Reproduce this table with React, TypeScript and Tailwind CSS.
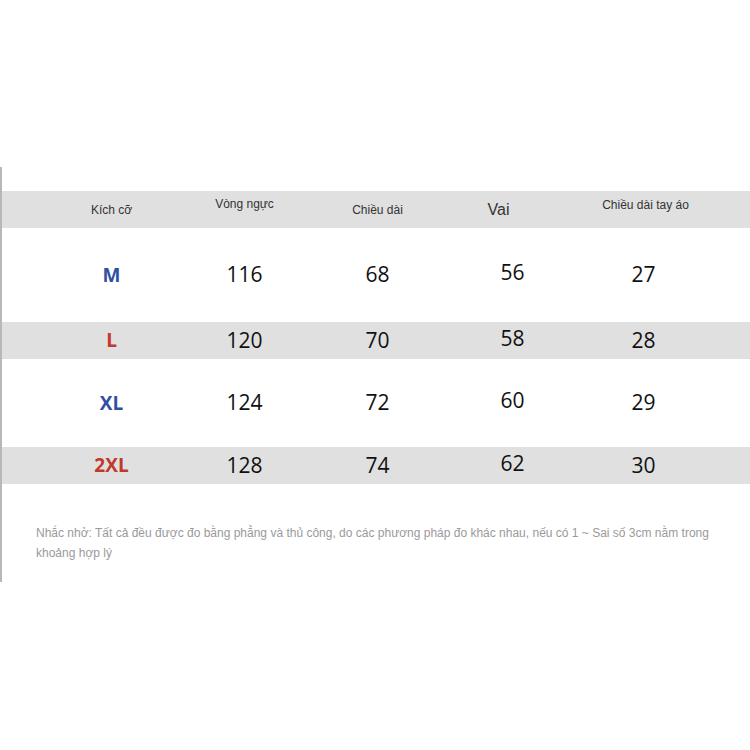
const headers = [
  { label: "Kích cỡ", cls: "text-[12px]" },
  { label: "Vòng ngực", cls: "text-[12px] -translate-y-[6px]" },
  { label: "Chiều dài", cls: "text-[12px]" },
  { label: "Vai", cls: "text-[16px] -translate-x-[12px]" },
  { label: "Chiều dài tay áo", cls: "text-[12px] -translate-y-[5px] translate-x-[2px]" },
]

const rows = [
  { size: "M", color: "text-[#2f4fa6]", values: ["116", "68", "56", "27"], band: false, h: "h-[94px]" },
  { size: "L", color: "text-[#c0392b]", values: ["120", "70", "58", "28"], band: true, h: "h-[37px]" },
  { size: "XL", color: "text-[#2f4fa6]", values: ["124", "72", "60", "29"], band: false, h: "h-[88px]" },
  { size: "2XL", color: "text-[#c0392b]", values: ["128", "74", "62", "30"], band: true, h: "h-[37px]" },
]

export default function App() {
  return (
    <div className="w-[750px] h-[750px] bg-white pt-[167px]">
      <div className="border-l-2 border-[#b8b8b8] h-[415px] pt-[24px]">
        {/* header band */}
        <div className="h-[37px] bg-[#e0e0e0] grid grid-cols-[133px_133px_133px_133px_133px] pl-[43px] items-center font-['Liberation_Sans',Arial,sans-serif] text-[#333]">
          {headers.map((h) => (
            <div key={h.label} className={`text-center ${h.cls}`}>
              {h.label}
            </div>
          ))}
        </div>

        {rows.map((r) => (
          <div
            key={r.size}
            className={`${r.h} ${r.band ? "bg-[#e0e0e0]" : ""} grid grid-cols-[133px_133px_133px_133px_133px] pl-[43px] items-center font-['Open_Sans',sans-serif]`}
          >
            <div className={`text-center text-[19px] font-bold ${r.color}`}>{r.size}</div>
            {r.values.map((v, i) => (
              <div
                key={i}
                className={`text-center text-[21px] text-[#111] ${i === 2 ? "-translate-y-[2px] translate-x-[2px]" : ""}`}
              >
                {v}
              </div>
            ))}
          </div>
        ))}

        <p className="mt-[39px] px-[34px] text-[12px] leading-[20px] text-[#9a9a9a] font-['Liberation_Sans',Arial,sans-serif]">
          Nhắc nhở: Tất cả đều được đo bằng phẳng và thủ công, do các phương pháp đo khác nhau, nếu có 1 ~ Sai số 3cm nằm trong khoảng hợp lý
        </p>
      </div>
    </div>
  )
}
